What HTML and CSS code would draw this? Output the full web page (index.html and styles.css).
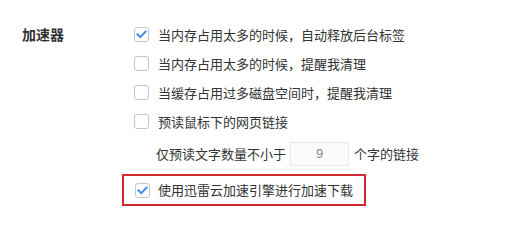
FILE: index.html
```html
<!DOCTYPE html>
<html lang="zh-CN">
<head>
<meta charset="utf-8">
<title>加速器</title>
<link rel="stylesheet" href="styles.css">
</head>
<body>
<div class="section">
  <div class="label">加速器</div>
  <div class="options">
    <div class="row">
      <span class="cb checked"><svg viewBox="0 0 15 15" width="15" height="15"><path d="M3.5 7.5 L6.3 10.2 L11.6 4.6" fill="none" stroke="#3c8ae6" stroke-width="2" stroke-linecap="square"/></svg></span>
      <span class="text">当内存占用太多的时候，自动释放后台标签</span>
    </div>
    <div class="row">
      <span class="cb"></span>
      <span class="text">当内存占用太多的时候，提醒我清理</span>
    </div>
    <div class="row">
      <span class="cb"></span>
      <span class="text">当缓存占用过多磁盘空间时，提醒我清理</span>
    </div>
    <div class="row">
      <span class="cb"></span>
      <span class="text">预读鼠标下的网页链接</span>
    </div>
    <div class="sub">
      <span class="text">仅预读文字数量不小于</span>
      <span class="num">9</span>
      <span class="text">个字的链接</span>
    </div>
    <div class="highlight">
      <span class="cb checked"><svg viewBox="0 0 15 15" width="15" height="15"><path d="M3.5 7.5 L6.3 10.2 L11.6 4.6" fill="none" stroke="#3c8ae6" stroke-width="2" stroke-linecap="square"/></svg></span>
      <span class="text">使用迅雷云加速引擎进行加速下载</span>
    </div>
  </div>
</div>
</body>
</html>
```
FILE: styles.css
```css
html, body {
  margin: 0;
  padding: 0;
  background: #ffffff;
}
body {
  font-family: "Noto Sans CJK SC", "Microsoft YaHei", sans-serif;
  color: #333333;
  font-size: 13px;
}
.section {
  display: flex;
  padding-top: 20px;
}
.label {
  width: 134px;
  flex: none;
  box-sizing: border-box;
  padding-left: 22px;
  font-size: 14px;
  font-weight: bold;
  line-height: 29px;
  color: #333;
}
.options {
  display: flex;
  flex-direction: column;
}
.row {
  display: flex;
  align-items: center;
  height: 29px;
}
.cb {
  width: 15px;
  height: 15px;
  box-sizing: border-box;
  border: 1px solid #c4c4c4;
  border-radius: 3px;
  background: #fff;
  margin-right: 9px;
  flex: none;
  position: relative;
}
.cb svg {
  position: absolute;
  left: -1px;
  top: -1px;
}
.text {
  line-height: 20px;
  white-space: nowrap;
}
.sub {
  display: flex;
  align-items: center;
  margin-top: 6px;
  padding-left: 22px;
  height: 24px;
}
.num {
  width: 59px;
  height: 24px;
  box-sizing: border-box;
  border: 1px solid #e3e9ef;
  background: #f9fbfd;
  color: #8a8a8a;
  text-align: center;
  line-height: 22px;
  margin-left: 4px;
  margin-right: 5px;
  font-family: "Liberation Sans", Arial, sans-serif;
  font-size: 13px;
}
.highlight {
  display: flex;
  align-items: center;
  margin-top: 8px;
  margin-left: -12px;
  width: 244px;
  height: 32px;
  box-sizing: border-box;
  border: 2px solid #d32a2f;
  padding-left: 11px;
}
.highlight .cb {
  margin-right: 8px;
}
```
